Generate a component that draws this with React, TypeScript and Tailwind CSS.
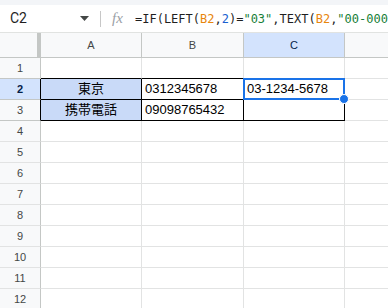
import React from 'react';

const cols = ['A', 'B', 'C', 'D'];
const rows = Array.from({ length: 12 }, (_, i) => i + 1);

const cellText: Record<string, string> = {
  A2: '東京',
  B2: '0312345678',
  C2: '03-1234-5678',
  A3: '携帯電話',
  B3: '09098765432',
};

// cells inside the black-bordered table
const boxed = (col: string, row: number) => (row === 2 || row === 3) && col !== 'D';

const Cell = ({ col, row }: { col: string; row: number }) => {
  const key = `${col}${row}`;
  const text = cellText[key];
  const isLabel = col === 'A' && boxed(col, row);
  const bottomBlack = (row === 1 || boxed(col, row)) && col !== 'D';
  const rightBlack = boxed(col, row);
  return (
    <div
      className={`relative h-[21px] border-b border-r overflow-visible ${
        bottomBlack ? 'border-b-black' : 'border-b-[#e2e3e3]'
      } ${rightBlack ? 'border-r-black' : 'border-r-[#e2e3e3]'} ${isLabel ? 'bg-[#c9daf8]' : 'bg-white'}`}
    >
      {text && (
        <div
          className={`absolute inset-0 flex items-end pb-[2px] px-[3px] text-[13px] leading-[16px] text-black whitespace-nowrap ${
            isLabel ? 'justify-center' : 'justify-start'
          }`}
          style={{ fontFamily: '"Liberation Sans", Arial, "Noto Sans CJK JP", sans-serif' }}
        >
          {text}
        </div>
      )}
      {key === 'C2' && (
        <div className="absolute left-[-1px] top-[-1px] right-[-1px] bottom-[-1px] border-2 border-[#1a73e8] z-10">
          <div className="absolute right-[-6px] bottom-[-6px] w-[10px] h-[10px] rounded-full bg-[#1a73e8] border border-white" />
        </div>
      )}
    </div>
  );
};

const Formula = () => (
  <div
    className="text-[12px] leading-[16px] whitespace-nowrap text-[#1f1f1f]"
    style={{ fontFamily: '"DejaVu Sans Mono", "Liberation Mono", monospace' }}
  >
    =IF(LEFT(<span className="text-[#e8860c]">B2</span>,<span className="text-[#1a5fd0]">2</span>)=
    <span className="text-[#188038]">"03"</span>,TEXT(<span className="text-[#e8860c]">B2</span>,
    <span className="text-[#188038]">"00-0000-0000"</span>),TEXT(
    <span className="text-[#e8860c]">B2</span>,<span className="text-[#188038]">"000-0000-0000"</span>))
  </div>
);

export default function App() {
  return (
    <div className="w-[388px] h-[308px] overflow-hidden bg-white" style={{ fontFamily: 'Roboto, "Liberation Sans", sans-serif' }}>
      <div className="h-[5px] bg-[#f3f5f8]" />
      {/* formula bar */}
      <div className="h-[28px] flex items-center border-b border-[#e1e3e1] bg-white">
        <div className="w-[100px] flex items-center pl-[10px] pr-[10px] justify-between">
          <span className="text-[14px] text-[#1f1f1f]">C2</span>
          <svg width="9" height="5" viewBox="0 0 9 5" className="mr-[1px]">
            <path d="M0 0h9L4.5 5z" fill="#444746" />
          </svg>
        </div>
        <div className="w-px h-[16px] bg-[#c7c7c7]" />
        <div
          className="w-[34px] pl-[11px] text-[15px] italic text-[#9aa0a6]"
          style={{ fontFamily: '"Liberation Serif", serif' }}
        >
          fx
        </div>
        <div className="flex-1 overflow-hidden">
          <Formula />
        </div>
      </div>
      {/* grid */}
      <div className="grid grid-cols-[41px_101px_102px_101px_101px] w-[446px]">
        <div className="h-[25px] bg-[#f8f9fa] border-r-[4px] border-b border-r-[#c4c7c5] border-b-[#c4c7c5]" />
        {cols.map((c) => (
          <div
            key={c}
            className={`h-[25px] flex items-center justify-center border-b border-r border-[#c4c7c5] text-[11px] ${
              c === 'C' ? 'bg-[#d3e3fd] text-[#041e49] border-b-[#c4c7c5]' : 'bg-[#f8f9fa] text-[#444746]'
            }`}
            style={{ fontFamily: 'Arial, "Liberation Sans", sans-serif' }}
          >
            {c}
          </div>
        ))}
        {rows.map((r) => (
          <React.Fragment key={r}>
            <div
              className={`h-[21px] flex items-center justify-center border-b border-r text-[11px] ${
                r === 2 ? 'bg-[#d3e3fd] text-[#041e49] font-bold' : 'bg-[#f8f9fa] text-[#444746]'
              } ${r === 2 || r === 3 ? 'border-r-black' : 'border-r-[#c4c7c5]'} ${
                r === 1 || r === 2 || r === 3 ? 'border-b-[#c4c7c5]' : 'border-b-[#e2e3e3]'
              }`}
              style={{ fontFamily: 'Arial, "Liberation Sans", sans-serif' }}
            >
              {r}
            </div>
            {cols.map((c) => (
              <Cell key={c} col={c} row={r} />
            ))}
          </React.Fragment>
        ))}
      </div>
    </div>
  );
}
